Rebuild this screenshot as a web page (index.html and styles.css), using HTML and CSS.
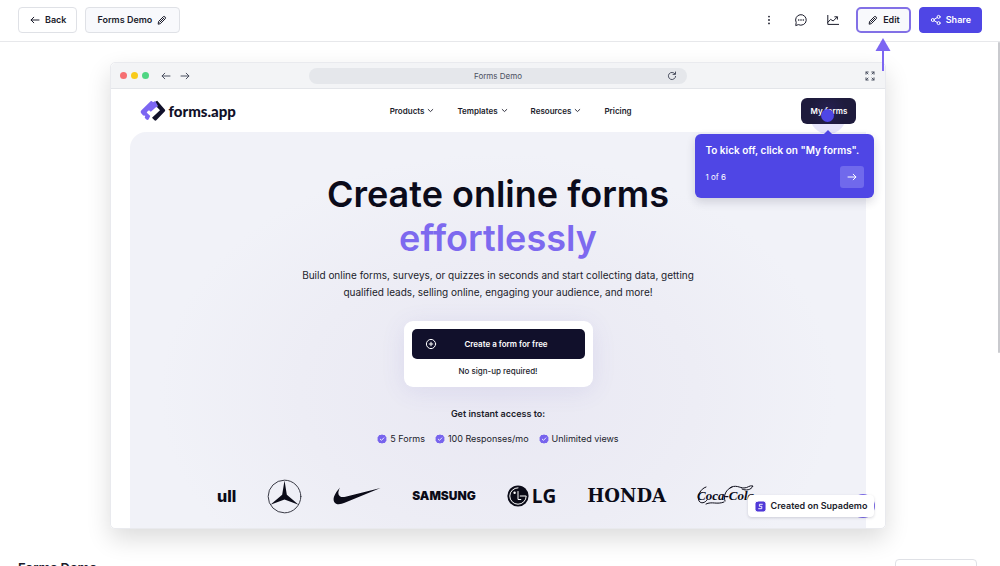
FILE: index.html
```html
<!DOCTYPE html>
<html lang="en">
<head>
<meta charset="utf-8">
<meta name="viewport" content="width=device-width, initial-scale=1">
<title>Forms Demo</title>
<link rel="stylesheet" href="styles.css">
</head>
<body>
<svg class="defs" width="0" height="0" aria-hidden="true">
  <symbol id="left" viewBox="0 0 12 12"><path d="M10 6H2.2M4.8 3.2L2 6L4.8 8.8"/></symbol>
  <symbol id="right" viewBox="0 0 12 12"><path d="M2 6H9.8M7.2 3.2L10 6L7.2 8.8"/></symbol>
  <symbol id="down" viewBox="0 0 8 8"><path d="M1.4 2.8L4 5.2L6.6 2.8"/></symbol>
  <symbol id="pencil" viewBox="0 0 12 12"><path d="M2.2 9.8L2.6 7.4L7.4 2.6A1.5 1.5 0 0 1 9.4 4.6L4.6 9.4ZM3.8 8.2L8 4M6.5 3.5L8.5 5.5"/></symbol>
  <symbol id="check" viewBox="0 0 12 12"><path class="seal" d="M6 .5L7.5 1.1L9.3 1.3L10.3 2.8L11.4 4.3L11.2 6L11.4 7.7L10.3 9.2L9.3 10.7L7.5 10.9L6 11.5L4.5 10.9L2.7 10.7L1.7 9.2L.6 7.7L.8 6L.6 4.3L1.7 2.8L2.7 1.3L4.5 1.1Z"/><path class="tick" d="M3.9 6.2L5.4 7.6L8.2 4.7"/></symbol>
</svg>

<header class="topbar">
  <button class="btn" type="button"><svg class="icon"><use href="#left"/></svg>Back</button>
  <button class="btn btn-name" type="button">Forms Demo<svg class="icon"><use href="#pencil"/></svg></button>
  <div class="tools">
    <button class="tool" type="button" aria-label="More"><svg viewBox="0 0 14 14"><g class="solid"><circle cx="7" cy="3.6" r=".9"/><circle cx="7" cy="7" r=".9"/><circle cx="7" cy="10.4" r=".9"/></g></svg></button>
    <button class="tool" type="button" aria-label="Comments"><svg viewBox="0 0 14 14"><path d="M1.8 12.2L2.2 9.4A5.3 5.3 0 1 1 4.7 11.8Z"/><g class="solid"><circle cx="4.7" cy="7" r=".8"/><circle cx="7" cy="7" r=".8"/><circle cx="9.3" cy="7" r=".8"/></g></svg></button>
    <button class="tool" type="button" aria-label="Analytics"><svg viewBox="0 0 14 14"><path d="M1.8 2.4V11.4H12.6M1.8 9.4L4.6 6.4L7.2 8L11.2 4M8.8 3.8H11.4V6.2"/></svg></button>
    <div class="edit-wrap">
      <button class="btn btn-edit" type="button"><svg class="icon"><use href="#pencil"/></svg>Edit</button>
      <svg class="pointer" viewBox="0 0 16 34" aria-hidden="true"><path d="M8 0L15.5 13H.5Z"/><rect x="7" y="12" width="2" height="21"/></svg>
    </div>
    <button class="btn btn-share" type="button"><svg class="icon" viewBox="0 0 12 12"><circle cx="2.8" cy="6" r="1.5"/><circle cx="8.6" cy="2.9" r="1.5"/><circle cx="8.6" cy="9.1" r="1.5"/><path d="M4.2 5.3L7.2 3.6M4.2 6.7L7.2 8.4"/></svg>Share</button>
  </div>
</header>

<main class="content">
  <section class="window" aria-label="Forms Demo">
    <div class="chrome">
      <div class="chrome-left">
        <i class="dot red"></i><i class="dot yellow"></i><i class="dot green"></i>
        <svg class="icon back"><use href="#left"/></svg><svg class="icon"><use href="#right"/></svg>
      </div>
      <div class="address"><span>Forms Demo</span><svg class="icon" viewBox="0 0 12 12"><path d="M8.9 3.8A3.6 3.6 0 1 0 9.6 6.4M9.5 2V4.4H7"/></svg></div>
      <svg class="icon expand" viewBox="0 0 12 12"><path d="M2 4.2V2H4.2M7.8 2H10V4.2M10 7.8V10H7.8M4.2 10H2V7.8M2 2L4 4M10 2L8 4M10 10L8 8M2 10L4 8"/></svg>
    </div>

    <div class="site">
      <nav class="nav">
        <a class="brand" href="#"><svg viewBox="0 0 26 22"><path class="dark" d="M15.2 1.8L17.2 .8L25 9.8Q25.5 10.6 24.9 11.3L16.3 20.3Q15.4 21.1 14.5 20.3L12 17.8L20 10.3L14.6 4.7Z"/><path class="violet" d="M1.2 10.6L10.6 1.3Q11.3 .7 12 1.3L13 2.3L14.2 1.4Q15 1 15.8 2L18 6L10.8 13.6L8.3 11.2L6.6 12.6L10.3 16.1L8.5 19.6Q7.4 20.5 6.4 19.6L4.7 17.8L5.3 15.8L3.2 15.4L1 13Q.2 11.8 1.2 10.6Z"/><path class="white" d="M7.4 11.6L9 10.2L10.8 11.8L16.2 7L17.8 8.6L10.7 15.2L7.4 12.6Z"/></svg><span>forms.app</span></a>
        <div class="links">
          <a href="#">Products<svg><use href="#down"/></svg></a>
          <a href="#">Templates<svg><use href="#down"/></svg></a>
          <a href="#">Resources<svg><use href="#down"/></svg></a>
          <a href="#">Pricing</a>
        </div>
        <div class="my">
          <span class="halo"></span>
          <button class="my-forms" type="button">My forms</button>
          <span class="hotspot"></span>
          <div class="tip" role="dialog" aria-label="Step">
            <p>To kick off, click on "My forms".</p>
            <div class="tip-row"><span>1 of 6</span><button type="button" aria-label="Next"><svg class="icon"><use href="#right"/></svg></button></div>
          </div>
        </div>
      </nav>

      <div class="hero">
        <h1>Create online forms<br><em>effortlessly</em></h1>
        <p class="lead">Build online forms, surveys, or quizzes in seconds and start collecting data, getting qualified leads, selling online, engaging your audience, and more!</p>
        <div class="cta">
          <button type="button"><svg class="icon" viewBox="0 0 12 12"><circle cx="6" cy="6" r="4.6"/><path d="M6 4.2V7.8M4.2 6H7.8"/></svg><span>Create a form for free</span></button>
          <p>No sign-up required!</p>
        </div>
        <p class="access">Get instant access to:</p>
        <ul class="perks">
          <li><svg><use href="#check"/></svg>5 Forms</li>
          <li><svg><use href="#check"/></svg>100 Responses/mo</li>
          <li><svg><use href="#check"/></svg>Unlimited views</li>
        </ul>
        <div class="logos">
          <span class="bull">ull</span>
          <svg class="benz" viewBox="0 0 36 36" role="img" aria-label="Mercedes"><circle cx="18" cy="18" r="16.8"/><path d="M18 1.5L20.4 16.3L32.5 26.4L18 21L3.5 26.4L15.6 16.3Z"/></svg>
          <svg class="swoosh" viewBox="0 0 48 20" role="img" aria-label="Nike"><path d="M7 1.5C2 7.2-.7 12.5 1.2 15.9C3.1 19.2 7.8 18.3 11.7 16.8L47.5 2L12.5 10.8C7.3 12.1 4.4 9.1 5.6 5.2C5.9 4 6.4 2.7 7 1.5Z"/></svg>
          <span class="samsung">SAMSUNG</span>
          <div class="lg"><svg viewBox="0 0 22 22"><circle class="disc" cx="11" cy="11" r="10.6"/><path d="M11 2.8A8.2 8.2 0 1 0 19.2 11H13.2M11 6.5V14.5H13.8"/><circle class="eye" cx="7.6" cy="7.8" r="1.2"/></svg><span>LG</span></div>
          <span class="honda">HONDA</span>
          <div class="cola"><span>Coca-Cola</span><svg viewBox="0 0 58 24" aria-hidden="true"><path d="M9 4C3 6 0 13 2 18C4 21 8 20 10 17M9 21C15 18 20 22 27 19M35 4C29 6 26 13 28 18M33 5C38 1 43 5 47 5C51 5 52 2 56 3C54 7 49 8 45 6"/></svg></div>
        </div>
      </div>
      <span class="chat"></span>
      <a class="made" href="#"><svg viewBox="0 0 12 12"><rect width="12" height="12" rx="3"/><path d="M8 3.6H4.8V5.8H7.4V8.4H4"/></svg>Created on Supademo</a>
    </div>
  </section>

  <div class="below"><h2>Forms Demo</h2><button class="btn" type="button" aria-label="Options"></button></div>
  <span class="thumb" aria-hidden="true"></span>
</main>
</body>
</html>
```
FILE: styles.css
```css
* { box-sizing: border-box; }
body {
  margin: 0;
  height: 100vh;
  display: flex;
  flex-direction: column;
  overflow: hidden;
  background: #fff;
  color: #1b1c2b;
  font: 9px/16px Inter, "Liberation Sans", sans-serif;
}
h1, h2, p, ul { margin: 0; padding: 0; }
a { color: inherit; text-decoration: none; }
button { font: inherit; color: inherit; padding: 0; border: 0; background: none; }
.defs { position: absolute; }
svg { display: block; flex: none; fill: none; stroke: currentColor; stroke-width: 1; stroke-linecap: round; stroke-linejoin: round; }
.icon { width: 12px; height: 12px; }
.solid { fill: currentColor; stroke: none; }

.topbar {
  position: relative;
  z-index: 3;
  flex: none;
  display: flex;
  align-items: center;
  gap: 8px;
  height: 42px;
  padding: 0 18px 1px;
  border-bottom: 1px solid #e7e8eb;
}
.btn {
  display: flex;
  align-items: center;
  justify-content: center;
  gap: 4px;
  height: 26px;
  padding: 0 10px;
  border: 1px solid #dfe1e6;
  border-radius: 4px;
  background: #fff;
  font-weight: 600;
}
.btn-name { padding: 0 11px; background: #f8f9fc; }
.tools { display: flex; align-items: center; gap: 18px; margin-left: auto; }
.tool svg { width: 14px; height: 14px; }
.edit-wrap { position: relative; margin-left: -2px; }
.btn-edit { padding: 0 9px; border: 2px solid #8270e6; border-radius: 5px; background: #f8f9fc; }
.btn-share { margin-left: -10px; border-color: #4f46e5; background: #4f46e5; color: #fff; }
.pointer { position: absolute; top: 31px; left: 50%; width: 16px; height: 34px; margin-left: -8px; fill: #7c66f2; stroke: none; }

.content { position: relative; flex: 1; min-height: 0; padding: 20px 4px 0 0; overflow: hidden; }
.thumb { position: absolute; top: 0; right: 0; width: 2px; height: 55vh; border-radius: 2px; background: #c9cace; }
.window {
  width: 78%;
  max-width: 1200px;
  margin: 0 auto;
  border: 1px solid #e9eaee;
  border-radius: 5px;
  box-shadow: 0 10px 24px rgba(0, 0, 0, .14);
}
.chrome {
  display: grid;
  grid-template-columns: 1fr 50% 1fr;
  align-items: center;
  height: 26px;
  padding: 0 9px;
  border-bottom: 1px solid #e3e5e9;
  border-radius: 5px 5px 0 0;
  background: #f3f4f6;
  color: #4b5060;
}
.chrome-left { display: flex; align-items: center; gap: 4px; }
.dot { width: 7px; height: 7px; border-radius: 50%; }
.red { background: #f66f72; }
.yellow { background: #f8cb1c; }
.green { background: #4fd683; }
.back { margin: 0 3px 0 7px; }
.address { display: flex; align-items: center; height: 16px; padding: 0 9px; border-radius: 8px; background: #e5e7eb; font-size: 8px; }
.address span { flex: 1; padding-left: 12px; text-align: center; }
.expand { justify-self: end; }

.site { position: relative; padding: 0 19px; border-radius: 0 0 5px 5px; background: #fff; }
.nav { display: flex; align-items: center; height: 43px; padding: 0 10px; }
.brand { display: flex; align-items: center; gap: 3px; font: 900 15px/20px Lato, sans-serif; color: #111027; }
.brand svg { width: 26px; height: 22px; stroke: none; }
.dark { fill: #11112b; }
.violet { fill: #7c66f2; }
.white { fill: #fff; }
.links { display: flex; gap: 23px; margin: 0 auto; padding-right: 16px; font-size: 8px; font-weight: 600; }
.links a { display: flex; align-items: center; gap: 3px; }
.links svg { width: 7px; height: 7px; }
.my { position: relative; }
.my-forms { position: relative; width: 55px; height: 26px; border-radius: 6px; background: radial-gradient(circle, #252052, #1e1b3c 60%); color: #fff; font-size: 8px; font-weight: 600; }
.hotspot { position: absolute; top: 11px; left: 20px; width: 13px; height: 13px; border-radius: 50%; background: #4f46e5; }
.halo { position: absolute; top: 0; left: 9px; width: 36px; height: 36px; border-radius: 50%; background: rgba(79, 70, 229, .14); }
.tip { position: absolute; z-index: 2; top: 36px; right: -18px; width: 179px; padding: 8px 10px 10px; border-radius: 6px; background: #4f46e5; color: #fff; box-shadow: 0 4px 10px rgba(30, 30, 60, .16); }
.tip::before { content: ""; position: absolute; top: -4px; right: 42px; border: solid transparent; border-width: 0 4px 4px; border-bottom-color: #4f46e5; }
.tip p { font-size: 10px; font-weight: 600; white-space: nowrap; }
.tip-row { display: flex; align-items: center; justify-content: space-between; margin-top: 8px; font-size: 8px; }
.tip button { display: grid; place-items: center; width: 24px; height: 22px; border-radius: 3px; background: #7069ec; }

.hero {
  display: flex;
  flex-direction: column;
  align-items: center;
  padding: 40px 20px 14px;
  border-radius: 16px 0 0 0;
  background: radial-gradient(ellipse at 50% 66%, #e9e8f3 0, #ededf5 38%, #f1f2f8 65%);
  text-align: center;
}
h1 { font-size: 36px; line-height: 44px; font-weight: 600; color: #0b0b1a; }
h1 em { font-style: normal; color: #7d69ef; }
.lead { max-width: 412px; margin-top: 7px; font-size: 10px; line-height: 17px; }
.cta { width: 189px; margin-top: 20px; padding: 8px; border-radius: 9px; background: #fff; box-shadow: 0 4px 24px rgba(90, 80, 190, .1); font-size: 8px; font-weight: 500; }
.cta button { display: flex; align-items: center; width: 100%; height: 30px; padding: 0 13px; border-radius: 5px; background: #11102b; color: #fff; font-weight: 600; }
.cta button span { flex: 1; padding-left: 4px; }
.cta p { margin-top: 4px; }
.access { margin-top: 19px; font-weight: 600; }
.perks { display: flex; gap: 10px; margin-top: 9px; list-style: none; }
.perks li { display: flex; align-items: center; gap: 3px; }
.perks svg { width: 10px; height: 10px; }
.seal { fill: #7763ed; stroke: none; }
.tick { stroke: #fff; }

.logos { display: flex; align-items: center; gap: 31px; height: 36px; margin: 31px 26px 0 0; color: #0b0b18; white-space: nowrap; }
.bull { font: 800 16px/20px Inter, sans-serif; }
.benz { width: 35px; height: 35px; fill: currentColor; stroke: none; }
.benz circle { fill: none; stroke: #33343f; stroke-width: 1; }
.swoosh { width: 48px; height: 20px; fill: currentColor; stroke: none; }
.samsung { font: 900 12px/20px Inter, sans-serif; }
.lg { display: flex; align-items: center; gap: 3px; font: 700 19px/22px "Open Sans", sans-serif; }
.lg svg { width: 22px; height: 22px; stroke: #fff; }
.disc { fill: #0b0b18; stroke: none; }
.eye { fill: #fff; stroke: none; }
.honda { font: 700 18px/20px "DejaVu Serif", serif; }
.cola { position: relative; width: 56px; font: italic 700 13px/20px "Liberation Serif", serif; }
.cola svg { position: absolute; top: -3px; left: 0; width: 58px; height: 24px; }

.chat { position: absolute; right: 10px; bottom: 10px; width: 24px; height: 24px; border-radius: 50%; background: #7c6be8; }
.made { position: absolute; right: 11px; bottom: 11px; display: flex; align-items: center; gap: 5px; height: 22px; padding: 0 7px; border-radius: 4px; background: #fff; box-shadow: 0 1px 3px rgba(20, 20, 50, .16); font-weight: 600; }
.made svg { width: 11px; height: 11px; fill: #4f38d8; stroke: #fff; }
.made path { fill: none; }

.below { display: flex; align-items: flex-start; justify-content: space-between; margin-top: 30px; padding: 0 19px 0 18px; }
.below h2 { font-size: 13px; line-height: 18px; font-weight: 600; }
.below .btn { width: 82px; }
```
